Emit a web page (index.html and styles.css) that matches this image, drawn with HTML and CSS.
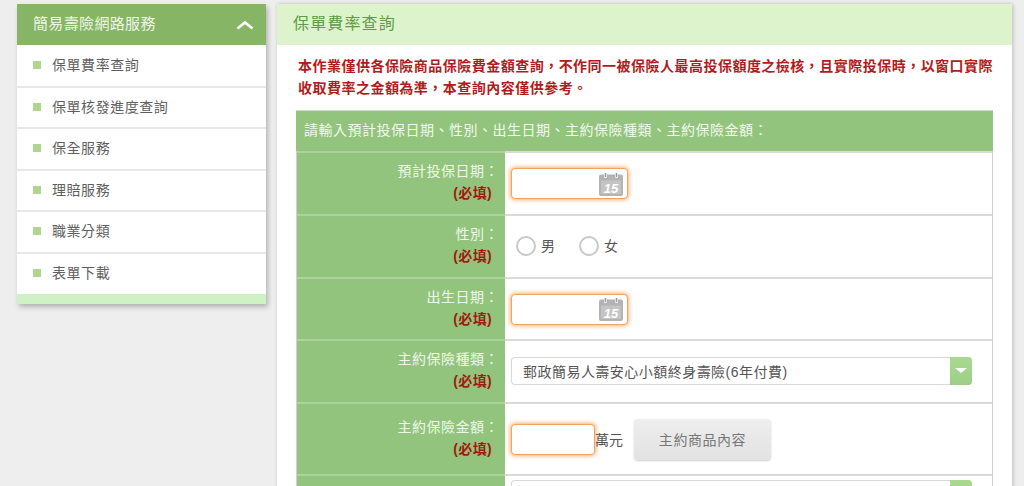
FILE: index.html
```html
<!DOCTYPE html>
<html lang="zh-Hant">
<head>
<meta charset="utf-8">
<title>保單費率查詢</title>
<link rel="stylesheet" href="styles.css">
</head>
<body>
<div class="page">
  <aside class="side">
    <div class="side-head"><span>簡易壽險網路服務</span>
      <svg class="chev" width="18" height="10" viewBox="0 0 18 10"><path d="M1.500 8.500 9 2.500l7.500 6" fill="none" stroke="#fff" stroke-width="2.600"/></svg>
    </div>
    <ul class="side-list">
      <li>保單費率查詢</li>
      <li>保單核發進度查詢</li>
      <li>保全服務</li>
      <li>理賠服務</li>
      <li>職業分類</li>
      <li>表單下載</li>
    </ul>
    <div class="side-foot"></div>
  </aside>
  <main class="panel">
    <h1 class="panel-head">保單費率查詢</h1>
    <p class="note">本作業僅供各保險商品保險費金額查詢，不作同一被保險人最高投保額度之檢核，且實際投保時，以窗口實際<br>收取費率之金額為準，本查詢內容僅供參考。</p>
    <div class="form">
      <div class="form-head">請輸入預計投保日期、性別、出生日期、主約保險種類、主約保險金額：</div>
      <div class="row h63">
        <div class="label">預計投保日期：<b>(必填)</b></div>
        <div class="field"><div class="date"><svg width="24" height="24" viewBox="0 0 24 24"><path d="M2 2.500h20a2 2 0 0 1 2 2V22a2 2 0 0 1-2 2H2a2 2 0 0 1-2-2V4.500a2 2 0 0 1 2-2z" fill="#b3b3b3"/><path d="M2 8.500h20V21a1 1 0 0 1-1 1H3a1 1 0 0 1-1-1z" fill="#c4c4c4"/><rect x="5" y="0" width="3" height="6" rx="1.500" fill="#fff"/><rect x="16" y="0" width="3" height="6" rx="1.500" fill="#fff"/><rect x="5.700" y="1" width="1.600" height="4" fill="#9a9a9a"/><rect x="16.700" y="1" width="1.600" height="4" fill="#9a9a9a"/><text x="12" y="20.500" text-anchor="middle" class="cal-num">15</text></svg></div></div>
      </div>
      <div class="row h63">
        <div class="label">性別：<b>(必填)</b></div>
        <div class="field radios">
          <span class="radio"><i></i><span class="radio-text">男</span></span>
          <span class="radio"><i></i><span class="radio-text">女</span></span>
        </div>
      </div>
      <div class="row h62">
        <div class="label">出生日期：<b>(必填)</b></div>
        <div class="field"><div class="date"><svg width="24" height="24" viewBox="0 0 24 24"><path d="M2 2.500h20a2 2 0 0 1 2 2V22a2 2 0 0 1-2 2H2a2 2 0 0 1-2-2V4.500a2 2 0 0 1 2-2z" fill="#b3b3b3"/><path d="M2 8.500h20V21a1 1 0 0 1-1 1H3a1 1 0 0 1-1-1z" fill="#c4c4c4"/><rect x="5" y="0" width="3" height="6" rx="1.500" fill="#fff"/><rect x="16" y="0" width="3" height="6" rx="1.500" fill="#fff"/><rect x="5.700" y="1" width="1.600" height="4" fill="#9a9a9a"/><rect x="16.700" y="1" width="1.600" height="4" fill="#9a9a9a"/><text x="12" y="20.500" text-anchor="middle" class="cal-num">15</text></svg></div></div>
      </div>
      <div class="row h63">
        <div class="label">主約保險種類：<b>(必填)</b></div>
        <div class="field up"><div class="select"><span>郵政簡易人壽安心小額終身壽險(6年付費)</span><em></em></div></div>
      </div>
      <div class="row h72">
        <div class="label">主約保險金額：<b>(必填)</b></div>
        <div class="field amount"><div class="money"></div><span class="unit">萬元</span><button class="btn" type="button">主約商品內容</button></div>
      </div>
      <div class="row h63">
        <div class="label"></div>
        <div class="field top"><div class="select"><span></span><em></em></div></div>
      </div>
    </div>
  </main>
</div>
</body>
</html>
```
FILE: styles.css
```css
* { box-sizing: border-box; }
html, body { margin: 0; height: 486px; overflow: hidden; }
body {
  background: #eeeeee;
  font-family: "Liberation Sans", "Noto Sans CJK TC", sans-serif;
  color: #555;
}
.page { display: flex; align-items: flex-start; gap: 11px; padding: 4px 0 0 17px; }
.side { width: 249px; flex: none; background: #fff; box-shadow: 2px 3px 5px rgba(0,0,0,.25); }
.side-head {
  height: 41px; background: #85b565; color: #eef6e6;
  display: flex; justify-content: space-between; align-items: center;
  padding: 0 12px 4px 16px; font-size: 15px; letter-spacing: .35px;
}
.chev { margin-top: 4px; }
.side-list { list-style: none; margin: 0; padding: 0; }
.side-list li {
  height: 41.500px; border-bottom: 2px solid #e8e8e8;
  display: flex; align-items: center; gap: 11px;
  padding: 0 0 3px 16px; font-size: 14px; letter-spacing: .55px; color: #5f5f5f;
}
.side-list li:first-child { height: 42.500px; }
.side-list li:last-child { border-bottom: 0; height: 40.500px; }
.side-list li::before { content: ""; width: 8px; height: 8px; margin-top: 2px; background: #afd68f; flex: none; }
.side-foot { height: 10px; background: #cff2c4; }
.panel {
  width: 735px; flex: none; background: #fff; height: 500px;
  box-shadow: 1px 0 4px rgba(0,0,0,.22);
}
.panel-head {
  margin: 0; height: 41px; line-height: 39px; padding-left: 16px;
  background: #dcf3cb; color: #5f9a45; font-size: 16px; font-weight: normal; letter-spacing: 1.150px;
}
.note {
  margin: 10px 10px 0 21px; height: 50px;
  font-size: 14px; line-height: 22px; font-weight: bold; color: #b01c1c; letter-spacing: .48px;
}
.form { margin: 5px 19px 0 19px; border: 1px solid #cfcfcf; border-top: 0; border-bottom: 0; }
.form-head {
  height: 41px; line-height: 39px; margin: 0 -1px; padding-left: 8px;
  background: #93c47d; color: #f2f8ee; font-size: 14px; letter-spacing: .5px;
  border-top: 1px solid #cfd9c8;
}
.row { display: flex; border-top: 2px solid #dadada; }
.h62 { height: 62px; }
.h63 { height: 63px; }
.h72 { height: 72px; }
.label {
  width: 208px; flex: none; background: #93c47d; color: #eff7ea;
  margin-top: -2px; border-top: 2px solid #aed29c; height: calc(100% + 2px);
  display: flex; flex-direction: column; justify-content: center;
  text-align: right; padding: 0 6px 3px 0; font-size: 14px; line-height: 22px; letter-spacing: .5px;
}
.label b { display: block; color: #a01c10; padding-right: 7px; letter-spacing: .35px; font-size: 14px; }
.field { flex: 1; display: flex; align-items: center; padding: 0 0 0 6px; font-size: 14px; color: #555; }
.date {
  width: 117px; height: 31px; background: #fff; border: 1px solid #efa55f; border-radius: 4px;
  box-shadow: 0 0 4px 1px rgba(240,150,70,.75);
  display: flex; justify-content: flex-end; align-items: center; padding-right: 4px;
}
.cal-num { font: italic bold 13px "Liberation Sans", sans-serif; fill: #fff; }
.radios { gap: 24px; padding-left: 11px; padding-bottom: 1px; }
.radio { display: flex; align-items: center; gap: 5px; }
.radio-text { margin-top: -3px; }
.radio i { width: 20px; height: 20px; border-radius: 50%; border: 2px solid #c8c8c8; background: #fff; }
.up { padding-bottom: 2px; }
.select {
  width: 461px; height: 28px; border: 1px solid #d8d8d8; border-right: 0; border-radius: 4px; background: #fff;
  display: flex; justify-content: space-between; align-items: stretch;
}
.select span { padding-left: 11px; line-height: 28px; font-size: 14px; letter-spacing: .47px; }
.select em {
  width: 22px; margin: -1px 0; background: linear-gradient(#a9d98f, #9ccf86); border-radius: 0 4px 4px 0;
  display: flex; align-items: center; justify-content: center;
}
.select em::after {
  content: ""; border: 6px solid transparent; border-top: 5px solid #fff; border-bottom: 0;
}
.amount { padding-bottom: 0; }
.money {
  width: 84px; height: 31px; background: #fff; border: 1px solid #efa55f; border-radius: 4px;
  box-shadow: 0 0 4px 1px rgba(240,150,70,.75);
}
.unit { margin-left: 0; width: 39px; margin-top: -1px; }
.btn {
  width: 137px; height: 41px; border: 0; border-radius: 4px;
  background: linear-gradient(#eeeeee, #e2e2e2); box-shadow: 0 1px 2px rgba(0,0,0,.2);
  color: #777; font: 14px "Liberation Sans", "Noto Sans CJK TC", sans-serif; letter-spacing: .55px;
}
.top { align-items: flex-start; padding-top: 4px; }
```
